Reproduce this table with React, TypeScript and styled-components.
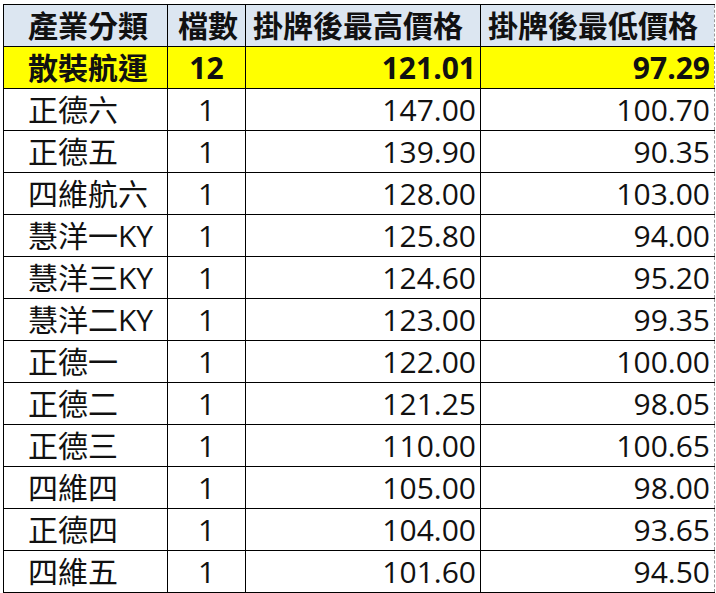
import React from "react";
import styled, { createGlobalStyle } from "styled-components";

const GlobalStyle = createGlobalStyle`
  html, body {
    margin: 0;
    padding: 0;
    background: #ffffff;
  }
  body {
    font-family: "Open Sans", "Noto Sans CJK TC", sans-serif;
  }
`;

type Row = { name: string; count: number; high: string; low: string };

const rows: Row[] = [
  { name: "正德六", count: 1, high: "147.00", low: "100.70" },
  { name: "正德五", count: 1, high: "139.90", low: "90.35" },
  { name: "四維航六", count: 1, high: "128.00", low: "103.00" },
  { name: "慧洋一KY", count: 1, high: "125.80", low: "94.00" },
  { name: "慧洋三KY", count: 1, high: "124.60", low: "95.20" },
  { name: "慧洋二KY", count: 1, high: "123.00", low: "99.35" },
  { name: "正德一", count: 1, high: "122.00", low: "100.00" },
  { name: "正德二", count: 1, high: "121.25", low: "98.05" },
  { name: "正德三", count: 1, high: "110.00", low: "100.65" },
  { name: "四維四", count: 1, high: "105.00", low: "98.00" },
  { name: "正德四", count: 1, high: "104.00", low: "93.65" },
  { name: "四維五", count: 1, high: "101.60", low: "94.50" },
];

const Page = () => {
  return (
    <Wrapper>
      <GlobalStyle />
      <Table>
        <colgroup>
          <col style={{ width: 164 }} />
          <col style={{ width: 78 }} />
          <col style={{ width: 235 }} />
          <col style={{ width: 234 }} />
        </colgroup>
        <thead>
          <tr>
            <HeadCell $align="left" $pad={24}>產業分類</HeadCell>
            <HeadCell $align="center">檔數</HeadCell>
            <HeadCell $align="left">掛牌後最高價格</HeadCell>
            <HeadCell $align="left">掛牌後最低價格</HeadCell>
          </tr>
        </thead>
        <tbody>
          <SummaryRow>
            <Cell $align="left" $pad={24}>散裝航運</Cell>
            <Cell $align="center">12</Cell>
            <Cell $align="right">121.01</Cell>
            <Cell $align="right">97.29</Cell>
          </SummaryRow>
          {rows.map((r) => (
            <tr key={r.name}>
              <Cell $align="left" $pad={24}>{r.name}</Cell>
              <Cell $align="center">{r.count}</Cell>
              <Cell $align="right">{r.high}</Cell>
              <Cell $align="right">{r.low}</Cell>
            </tr>
          ))}
        </tbody>
      </Table>
    </Wrapper>
  );
};

const Wrapper = styled.div`
  padding: 4px 0 0 3px;
  width: 716px;
  height: 593px;
  box-sizing: border-box;
  overflow: hidden;
`;

const Table = styled.table`
  border-collapse: collapse;
  table-layout: fixed;
  width: 711px;
  color: #111;
  font-size: 30px;

  td,
  th {
    border: 1px solid #000;
    height: 42px;
    box-sizing: border-box;
    line-height: 1;
    white-space: nowrap;
    overflow: hidden;
  }

  td:last-child,
  th:last-child {
    border-right: 1px dashed #9a9a9a;
  }
`;

const HeadCell = styled.th<{ $align: string; $pad?: number }>`
  background: #dce6f1;
  font-weight: 700;
  text-align: ${(p) => p.$align};
  padding: 0 ${(p) => (p.$align === "left" ? 2 : 4)}px 0
    ${(p) => p.$pad ?? 7}px;
`;

const Cell = styled.td<{ $align: string; $pad?: number }>`
  text-align: ${(p) => p.$align};
  padding: 0 4px 0 ${(p) => p.$pad ?? 4}px;
`;

const SummaryRow = styled.tr`
  background: #ffff00;
  font-weight: 700;
`;

export default Page;
